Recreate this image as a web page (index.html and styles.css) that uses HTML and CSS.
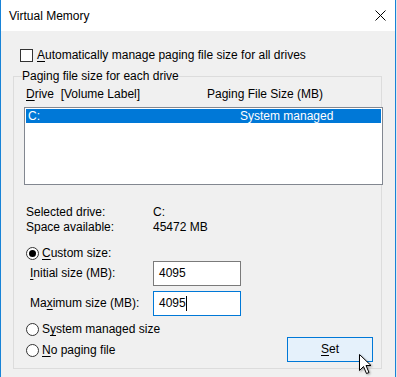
FILE: index.html
```html
<!DOCTYPE html>
<html lang="en">

<head>
    <meta charset="UTF-8">
    <meta name="viewport" content="width=device-width, initial-scale=1.0">
    <title>Virtual Memory</title>
    <link rel="stylesheet" href="styles.css">
</head>

<body>
    <div class="window">
        <div class="titlebar">
            <span class="title">Virtual Memory</span>
            <svg class="close" width="11" height="11" viewBox="0 0 11 11">
                <path d="M0.5 0.5 L10.5 10.5 M10.5 0.5 L0.5 10.5" stroke="#000" stroke-width="1" fill="none" />
            </svg>
        </div>

        <div class="client">
            <div class="check-row">
                <span class="checkbox"></span>
                <span><u>A</u>utomatically manage paging file size for all drives</span>
            </div>

            <div class="group">
                <div class="group-title">Paging file size for each drive</div>

                <div class="list-head">
                    <span class="col-drive"><u>D</u>rive&nbsp; [Volume Label]</span>
                    <span>Paging File Size (MB)</span>
                </div>

                <div class="listbox">
                    <div class="list-row selected">
                        <span class="col-name">C:</span>
                        <span>System managed</span>
                    </div>
                </div>

                <div class="info">
                    <span>Selected drive:</span><span>C:</span>
                    <span>Space available:</span><span>45472 MB</span>
                </div>

                <div class="radio-row custom">
                    <span class="radio checked"></span>
                    <span><u>C</u>ustom size:</span>
                </div>

                <div class="size-row">
                    <span class="size-label"><u>I</u>nitial size (MB):</span>
                    <div class="textbox">4095</div>
                </div>
                <div class="size-row">
                    <span class="size-label">Ma<u>x</u>imum size (MB):</span>
                    <div class="textbox focused">4095<span class="caret"></span></div>
                </div>

                <div class="bottom">
                    <div class="radios">
                        <div class="radio-row">
                            <span class="radio"></span>
                            <span>S<u>y</u>stem managed size</span>
                        </div>
                        <div class="radio-row">
                            <span class="radio"></span>
                            <span><u>N</u>o paging file</span>
                        </div>
                    </div>
                    <div class="button"><u>S</u>et</div>
                </div>
            </div>
        </div>

        <!-- mouse pointer over the Set button -->
        <svg class="cursor" width="14" height="21" viewBox="0 0 14 21">
            <path d="M0.5 0.5 L0.5 16.5 L4.5 12.5 L7.5 19.5 L10 18.5 L7 11.5 L12 11.5 Z" fill="#fff" stroke="#000" stroke-width="1" stroke-linejoin="miter" />
        </svg>
    </div>
</body>

</html>
```

FILE: styles.css
```css
body {
    margin: 0;
    background-color: #dfe6ec;
    font-family: 'Liberation Sans', Arial, sans-serif;
    font-size: 12px;
    line-height: 15px;
    color: #000;
}

.window {
    position: relative;
    width: 396px;
    height: 377px;
    box-sizing: border-box;
    border-left: 1px solid #1883d7;
    border-right: 1px solid #1883d7;
    background-color: #f0f0f0;
    overflow: hidden;
}

.titlebar {
    height: 31px;
    background-color: #fff;
    display: flex;
    align-items: center;
    justify-content: space-between;
    padding: 0 9px 0 8px;
}

.title {
    margin-top: 1px;
}

.close {
    display: block;
}

.client {
    padding: 0 13px 0 12px;
}

u {
    text-decoration-thickness: 1px;
    text-underline-offset: 2px;
}

.check-row {
    display: flex;
    align-items: center;
    height: 15px;
    margin-top: 17px;
    margin-left: 7px;
    gap: 4px;
}

.checkbox {
    width: 13px;
    height: 13px;
    box-sizing: border-box;
    border: 1px solid #333;
    background-color: #fff;
}

.group {
    margin-top: 13px;
    border: 1px solid #dcdcdc;
    padding-bottom: 6px;
}

.group-title {
    display: table;
    margin: -8px 0 0 8px;
    background-color: #f0f0f0;
}

.list-head {
    display: flex;
    margin-top: 3px;
    padding-left: 12px;
}

.col-drive {
    width: 181px;
}

.listbox {
    width: 359px;
    height: 78px;
    box-sizing: border-box;
    margin: 5px 0 0 10px;
    border: 1px solid #828790;
    background-color: #fff;
    padding: 1px;
}

.list-row {
    display: flex;
    height: 14px;
    line-height: 14px;
    padding-left: 2px;
}

.list-row.selected {
    background-color: #0078d7;
    color: #fff;
}

.col-name {
    width: 212px;
}

.info {
    display: grid;
    grid-template-columns: 127px auto;
    margin: 20px 0 0 12px;
}

.radio-row {
    display: flex;
    align-items: center;
    height: 15px;
    gap: 3px;
    margin-left: 12px;
}

.radio-row.custom {
    margin-top: 11px;
}

.radio {
    position: relative;
    width: 13px;
    height: 13px;
    box-sizing: border-box;
    border: 1px solid #333;
    border-radius: 50%;
    background-color: #fff;
}

.radio.checked::after {
    content: '';
    position: absolute;
    left: 2px;
    top: 2px;
    width: 7px;
    height: 7px;
    border-radius: 50%;
    background-color: #000;
}

.size-row {
    display: flex;
    align-items: center;
    margin-left: 16px;
    margin-bottom: 5px;
}

.size-label {
    width: 123px;
}

.textbox {
    width: 88px;
    height: 25px;
    box-sizing: border-box;
    border: 1px solid #7a7a7a;
    background-color: #fff;
    padding-left: 5px;
    display: flex;
    align-items: center;
}

.textbox.focused {
    border-color: #0078d7;
}

.caret {
    display: inline-block;
    width: 1px;
    height: 15px;
    background-color: #000;
}

.bottom {
    display: flex;
    justify-content: space-between;
    align-items: flex-start;
    margin-top: 6px;
    padding-right: 8px;
}

.radios {
    display: flex;
    flex-direction: column;
    gap: 6px;
}

.button {
    width: 86px;
    height: 25px;
    box-sizing: border-box;
    margin-top: 15px;
    border: 1px solid #0078d7;
    background-color: #e5f1fb;
    text-align: center;
    line-height: 23px;
}

.cursor {
    position: absolute;
    left: 358px;
    top: 354px;
    filter: drop-shadow(1px 1px 1px rgba(0, 0, 0, 0.35));
}
```
